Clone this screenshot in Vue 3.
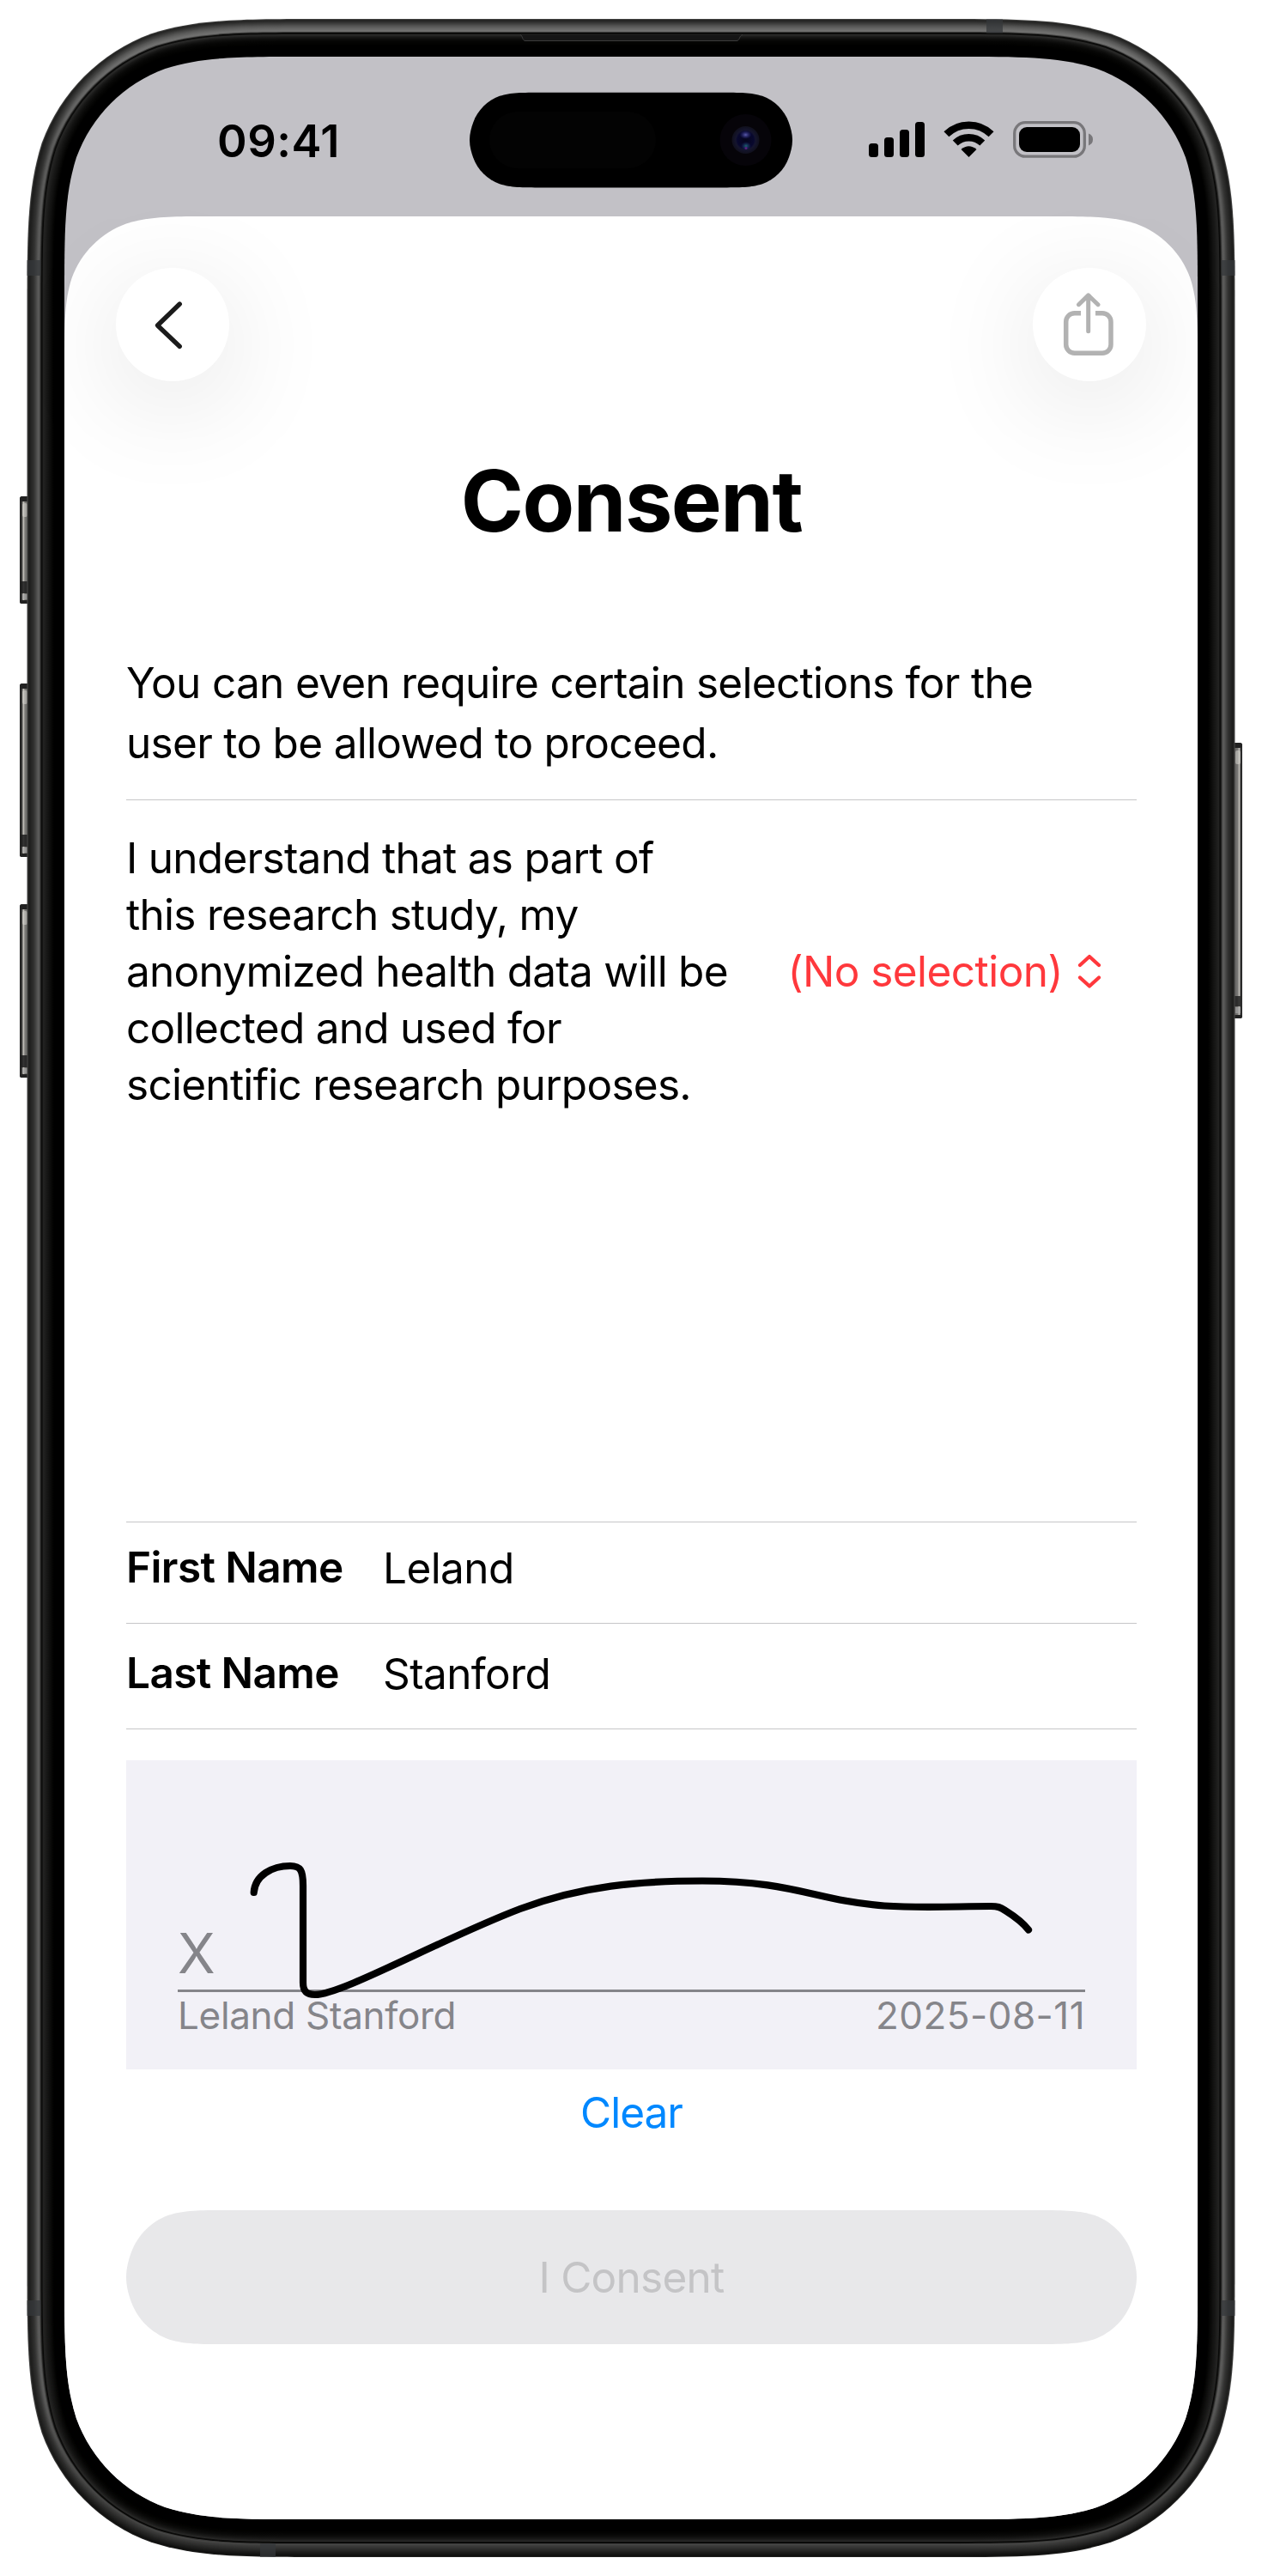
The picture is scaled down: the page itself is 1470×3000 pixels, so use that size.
<script setup>
// Continuous-curvature corner, in units of the corner radius.
const A = 1.52866, B = 1.08849, C = 0.86841, D = 0.63149, E = 0.07491, F = 0.37282, G = 0.16906

function squircle(x, y, w, h, r, rb = r) {
  const X = x + w, Y = y + h
  const bottom = rb
    ? `V${Y - A * rb}C${X} ${Y - B * rb} ${X} ${Y - C * rb} ${X - E * rb} ${Y - D * rb}` +
      `C${X - G * rb} ${Y - F * rb} ${X - F * rb} ${Y - G * rb} ${X - D * rb} ${Y - E * rb}` +
      `C${X - C * rb} ${Y} ${X - B * rb} ${Y} ${X - A * rb} ${Y}H${x + A * rb}` +
      `C${x + B * rb} ${Y} ${x + C * rb} ${Y} ${x + D * rb} ${Y - E * rb}` +
      `C${x + F * rb} ${Y - G * rb} ${x + G * rb} ${Y - F * rb} ${x + E * rb} ${Y - D * rb}` +
      `C${x} ${Y - C * rb} ${x} ${Y - B * rb} ${x} ${Y - A * rb}`
    : `V${Y}H${x}`
  return `M${x + A * r} ${y}H${X - A * r}` +
    `C${X - B * r} ${y} ${X - C * r} ${y} ${X - D * r} ${y + E * r}` +
    `C${X - F * r} ${y + G * r} ${X - G * r} ${y + F * r} ${X - E * r} ${y + D * r}` +
    `C${X} ${y + C * r} ${X} ${y + B * r} ${X} ${y + A * r}` + bottom + `V${y + A * r}` +
    `C${x} ${y + B * r} ${x} ${y + C * r} ${x + E * r} ${y + D * r}` +
    `C${x + G * r} ${y + F * r} ${x + F * r} ${y + G * r} ${x + D * r} ${y + E * r}` +
    `C${x + C * r} ${y} ${x + B * r} ${y} ${x + A * r} ${y}Z`
}

function capsule(x, y, w, h) {
  const r = h / 2, X = x + w, Y = y + h
  return `M${x + A * r} ${y}H${X - A * r}` +
    `C${X - B * r} ${y} ${X - C * r} ${y} ${X - D * r} ${y + E * r}` +
    `C${X - F * r} ${y + G * r} ${X - G * r} ${y + F * r} ${X - E * r} ${y + D * r}` +
    `C${X - 0.038 * r} ${y + 0.735 * r} ${X} ${y + 0.86 * r} ${X} ${y + r}` +
    `C${X} ${Y - 0.86 * r} ${X - 0.038 * r} ${Y - 0.735 * r} ${X - E * r} ${Y - D * r}` +
    `C${X - G * r} ${Y - F * r} ${X - F * r} ${Y - G * r} ${X - D * r} ${Y - E * r}` +
    `C${X - C * r} ${Y} ${X - B * r} ${Y} ${X - A * r} ${Y}H${x + A * r}` +
    `C${x + B * r} ${Y} ${x + C * r} ${Y} ${x + D * r} ${Y - E * r}` +
    `C${x + F * r} ${Y - G * r} ${x + G * r} ${Y - F * r} ${x + E * r} ${Y - D * r}` +
    `C${x + 0.038 * r} ${Y - 0.735 * r} ${x} ${Y - 0.86 * r} ${x} ${y + r}` +
    `C${x} ${y + 0.86 * r} ${x + 0.038 * r} ${y + 0.735 * r} ${x + E * r} ${y + D * r}` +
    `C${x + G * r} ${y + F * r} ${x + F * r} ${y + G * r} ${x + D * r} ${y + E * r}` +
    `C${x + C * r} ${y} ${x + B * r} ${y} ${x + A * r} ${y}Z`
}

// Brightness of the metal band and glass edge, from the outside in.
const top = [66, 36, 40, 46, 54, 62, 70, 78, 86, 92, 98, 103, 108, 112, 108, 60, 6, 16, 42, 36, 28, 22, 17, 13, 10, 7, 5, 4, 3, 2, 1, 0]
const side = [70, 34, 30, 32, 36, 40, 44, 48, 54, 62, 70, 80, 88, 92, 84, 52, 20, 6, 34, 34, 31, 28, 25, 22, 20, 17, 14, 11, 8, 5, 2, 0]
const base = [30, 16, 18, 22, 26, 30, 34, 38, 42, 46, 50, 54, 58, 62, 70, 58, 6, 14, 40, 34, 28, 23, 19, 15, 12, 9, 7, 5, 3, 2, 1, 0]
const grey = v => `rgb(${v},${v},${Math.max(0, v - 1)})`
const rings = side.map((v, i) => ({
  id: `ring${i}`,
  d: squircle(31.5 + i, 22 + i, 1407 - 2 * i, 2956 - 2 * i, 229 - i),
  top: grey(top[i]), side: grey(v), base: grey(base[i]),
}))

const screenPath = squircle(75, 66, 1320, 2868, 186)
const sheetPath = squircle(75, 252, 1320, 2700, 114, 0)
const islandPath = capsule(547, 107.7, 376, 110.8)
const buttonPath = capsule(0, 0, 1177, 156)

const bands = [
  [31.5, 303, 16, 18], [1422.5, 303, 16, 18],
  [31.5, 2679, 16, 18], [1422.5, 2679, 16, 18],
  [1149, 22.5, 19, 16], [303, 2962, 18, 16],
]
const leftKeys = [[578, 125], [796, 202], [1053, 202]]

const names = [
  { label: 'First Name', value: 'Leland', key: 'first' },
  { label: 'Last Name', value: 'Stanford', key: 'last' },
]
</script>

<template>
  <div class="device">
    <svg class="frame" width="1470" height="3000" viewBox="0 0 1470 3000" aria-hidden="true">
      <defs>
        <linearGradient v-for="r in rings" :id="r.id" :key="r.id" x1="0" y1="0" x2="0" y2="1">
          <stop offset="0" :stop-color="r.top" />
          <stop offset="0.008" :stop-color="r.top" />
          <stop offset="0.05" :stop-color="r.side" />
          <stop offset="0.94" :stop-color="r.side" />
          <stop offset="0.985" :stop-color="r.base" />
          <stop offset="1" :stop-color="r.base" />
        </linearGradient>
        <linearGradient id="key" x1="0" y1="0" x2="1" y2="0">
          <stop offset="0" stop-color="#222" /><stop offset="0.18" stop-color="#2a2a29" />
          <stop offset="0.36" stop-color="#c4c2bc" /><stop offset="0.5" stop-color="#7a7976" />
          <stop offset="1" stop-color="#5c5b59" />
        </linearGradient>
        <linearGradient id="keyRight" x1="1" y1="0" x2="0" y2="0">
          <stop offset="0" stop-color="#222" /><stop offset="0.15" stop-color="#333" />
          <stop offset="0.28" stop-color="#c4c2bc" /><stop offset="0.42" stop-color="#7c7b79" />
          <stop offset="1" stop-color="#4c4b4a" />
        </linearGradient>
        <radialGradient id="lens">
          <stop offset="0" stop-color="#05051c" /><stop offset="0.6" stop-color="#08082e" />
          <stop offset="0.72" stop-color="#15152e" /><stop offset="1" stop-color="#10101c" />
        </radialGradient>
        <radialGradient id="glint">
          <stop offset="0" stop-color="#5c5cae" /><stop offset="1" stop-color="#2a2a80" stop-opacity="0" />
        </radialGradient>
        <radialGradient id="glow">
          <stop offset="0" stop-color="#1c6670" /><stop offset="1" stop-color="#1c2670" stop-opacity="0" />
        </radialGradient>
        <clipPath id="glass"><path :d="screenPath" /></clipPath>
      </defs>

      <g v-for="[y, h] in leftKeys" :key="y">
        <rect x="23" :y="y" width="12" :height="h" rx="3" fill="url(#key)" />
        <rect x="23" :y="y" width="12" height="6" rx="3" fill="#222" />
        <rect x="26" :y="y + 8" width="6" height="16" rx="2" fill="#d6d4ce" opacity=".55" />
        <rect x="24" :y="y + h - 26" width="10" height="14" fill="#1c1c1c" opacity=".85" />
        <rect x="26" :y="y + h - 11" width="6" height="6" fill="#aaa" opacity=".6" />
        <rect x="23" :y="y + h - 4" width="12" height="4" rx="2" fill="#222" />
      </g>
      <rect x="1435" y="865" width="12" height="321" rx="3" fill="url(#keyRight)" />
      <rect x="1435" y="865" width="12" height="6" rx="3" fill="#222" />
      <rect x="1439" y="874" width="6" height="16" rx="2" fill="#d6d4ce" opacity=".55" />
      <rect x="1437" y="1160" width="8" height="12" fill="#1c1c1c" opacity=".8" />
      <rect x="1439" y="1173" width="6" height="7" fill="#aaa" opacity=".6" />
      <rect x="1437" y="1182" width="10" height="4" rx="2" fill="#222" />

      <path v-for="r in rings" :key="r.id" :d="r.d" :fill="`url(#${r.id})`" />
      <rect v-for="b in bands" :key="b.join()" :x="b[0]" :y="b[1]" :width="b[2]" :height="b[3]"
        fill="#36383b" opacity=".75" />
      <path d="M606 40.500C609 41 608 47.500 612 47.500H858C862 47.500 861 41 865 40.500Z" fill="#151515" />
      <path d="M606 40.500C609 41 608 47.500 612 47.500H858C862 47.500 861 41 865 40.500" fill="none" stroke="#3c3c3c" />

      <g clip-path="url(#glass)">
        <rect x="75" y="66" width="1320" height="2868" fill="#c2c1c6" />
        <path :d="sheetPath" fill="#fff" />
      </g>

      <path :d="islandPath" />
      <rect x="570" y="130" width="194" height="66" rx="33" fill="#030303" />
      <circle cx="868.500" cy="163" r="30" fill="#060409" />
      <circle cx="868.500" cy="163" r="16" fill="url(#lens)" />
      <ellipse cx="868.500" cy="157" rx="7" ry="5" fill="url(#glint)" />
      <ellipse cx="869" cy="170" rx="6" ry="5" fill="url(#glow)" />
      <circle cx="869" cy="172.500" r="1.500" fill="#5a2080" />
    </svg>

    <div class="screen">
      <header class="status">
        <span class="time">09:41</span>
        <svg class="indicators" width="264" height="46" viewBox="1011 140 264 46">
          <rect x="1012" y="167" width="11" height="16" rx="3.500" />
          <rect x="1030" y="160" width="11" height="23" rx="3.500" />
          <rect x="1048" y="151" width="11" height="32" rx="3.500" />
          <rect x="1066" y="142" width="11" height="41" rx="3.500" />
          <path d="M1128.500 183L1119.500 174Q1128.500 166.500 1137.500 174Z" />
          <g fill="none" stroke="#000" stroke-width="8.500">
            <path d="M1112.700 166.500A23 23 0 0 1 1144.300 166.500" />
            <path d="M1102.400 156.300A37.500 37.500 0 0 1 1154.600 156.300" />
          </g>
          <rect x="1181.700" y="142.700" width="81.600" height="39.500" rx="12.500" fill="none" stroke="#78777a" stroke-width="3.300" />
          <rect x="1187" y="148" width="71" height="29" rx="9" />
          <path d="M1268 155.500Q1273 157.500 1273 162.500T1268 169.500Z" fill="#78777a" />
        </svg>
      </header>

      <nav class="toolbar">
        <button class="round" aria-label="Back">
          <svg width="132" height="132" viewBox="135 312 132 132">
            <path d="M209.300 354L183.500 379L209.300 403.500" fill="none" stroke="#1b1b1b" stroke-width="5.300"
              stroke-linecap="round" stroke-linejoin="round" />
          </svg>
        </button>
        <button class="round" aria-label="Share" disabled>
          <svg width="132" height="132" viewBox="1203 312 132 132">
            <g fill="none" stroke="#b2b2b2" stroke-width="5.500">
              <path d="M1259 364.700H1251.700A10 10 0 0 0 1241.700 374.700V401.300A10 10 0 0 0 1251.700 411.300H1284A10 10 0 0 0 1294 401.300V374.700A10 10 0 0 0 1284 364.700H1276" />
              <path d="M1267.700 385.700V344M1256.500 354.700L1267.700 343.900L1279 354.700" stroke-width="5" stroke-linecap="round" stroke-linejoin="round" />
            </g>
          </svg>
        </button>
      </nav>

      <main class="content">
        <h1>Consent</h1>
        <p class="intro">You can even require certain selections for the<br>user to be allowed to proceed.</p>
        <section class="choice">
          <p>I understand that as part of<br>this research study, my<br>anonymized health data will be<br>collected and used for<br>scientific research purposes.</p>
          <div class="picker">
            <span>(No selection)</span>
            <svg width="30" height="42" viewBox="0 0 30 42">
              <path d="M4 14L15 4L26 14M4 28.500L15 38.500L26 28.500" fill="none" stroke="#ff383c" stroke-width="4.200"
                stroke-linecap="round" stroke-linejoin="round" />
            </svg>
          </div>
        </section>

        <section class="names">
          <div v-for="n in names" :key="n.key" class="name" :class="n.key">
            <span class="label">{{ n.label }}</span>
            <span class="value">{{ n.value }}</span>
          </div>
        </section>

        <section class="signature">
          <div class="mark">X</div>
          <div class="rule"></div>
          <div class="caption"><span>Leland Stanford</span><span class="date">2025-08-11</span></div>
          <svg class="ink" width="1177" height="360" viewBox="147 2050 1177 360">
            <path d="M295.700 2204C297 2184 317 2173 338 2173C350 2173 353 2178 353 2196V2309C353 2319 357 2323 367 2323C398 2323 514 2258 606 2223C678 2196 745 2190.500 818 2190.500C925 2190.500 948 2213 1030 2219.500C1075 2222.500 1115 2220 1154 2220C1162 2220 1165 2221 1171 2225Q1190 2237 1198 2247.500"
              fill="none" stroke="#000" stroke-width="8.200" stroke-linecap="round" stroke-linejoin="round" />
          </svg>
        </section>
        <button class="clear">Clear</button>

        <button class="consent" disabled>
          <svg class="pill" width="1177" height="156" viewBox="0 0 1177 156"><path :d="buttonPath" fill="#e8e8ea" /></svg>
          <span>I Consent</span>
        </button>
      </main>
    </div>
  </div>
</template>

<style>
body { margin: 0; background: #fff; }
</style>

<style scoped>
.device {
  position: relative;
  width: 1470px;
  height: 3000px;
  overflow: hidden;
  background: #fff;
  font-family: Inter, "Liberation Sans", sans-serif;
  font-size: 49.5px;
  letter-spacing: -0.6px;
  color: #000;
}
.frame { position: absolute; inset: 0; }
.screen {
  position: relative;
  box-sizing: border-box;
  width: 1320px;
  height: 2868px;
  margin: 66px 75px;
  display: flex;
  flex-direction: column;
}
p, h1 { margin: 0; }
button {
  padding: 0;
  border: 0;
  background: none;
  font: inherit;
  letter-spacing: inherit;
  color: inherit;
}
.status {
  display: flex;
  justify-content: space-between;
  box-sizing: border-box;
  height: 186px;
  padding: 68px 120px 0 178px;
}
.time { font-size: 52.5px; line-height: 60px; font-weight: 600; letter-spacing: 0.5px; }
.indicators { margin-top: 6px; }
.toolbar {
  display: flex;
  justify-content: space-between;
  padding: 60px 60px 0;
}
.round {
  width: 132px;
  height: 132px;
  border-radius: 50%;
  background: #fff;
  box-shadow: 0 24px 130px rgba(0, 0, 0, .12);
}
.round svg { display: block; }
.content {
  display: flex;
  flex-direction: column;
  padding: 0 71px 0 72px;
}
h1 {
  margin-top: 79px;
  font-size: 99px;
  line-height: 120px;
  font-weight: 700;
  letter-spacing: -1.5px;
  text-align: center;
}
.intro {
  height: 140px;
  margin-top: 117px;
  padding-bottom: 31px;
  border-bottom: 1px solid #c6c6c8;
  line-height: 70px;
  letter-spacing: -0.69px;
  white-space: nowrap;
}
.choice {
  display: flex;
  align-items: center;
  justify-content: space-between;
  margin-top: 34px;
  line-height: 66px;
  letter-spacing: -0.72px;
  white-space: nowrap;
}
.picker {
  display: flex;
  align-items: center;
  gap: 16px;
  padding-right: 40px;
  letter-spacing: -0.55px;
  color: #ff383c;
}
.names {
  margin-top: 476px;
  border-top: 1px solid #c6c6c8;
}
.name {
  display: flex;
  box-sizing: border-box;
  border-bottom: 1px solid #c6c6c8;
  line-height: 60px;
}
.first { height: 118px; padding-top: 22px; }
.last { height: 123px; padding-top: 27px; }
.label { width: 299px; font-weight: 600; }
.value { padding-top: 1px; }
.signature {
  position: relative;
  box-sizing: border-box;
  height: 360px;
  margin-top: 36px;
  padding: 185px 60px 0;
  background: #f2f1f7;
  color: #85858a;
}
.mark { font-size: 64px; line-height: 80px; }
.rule { height: 3px; margin-top: 2px; background: #85858a; }
.caption {
  display: flex;
  justify-content: space-between;
  font-size: 44px;
  line-height: 54px;
  letter-spacing: -0.32px;
}
.date { letter-spacing: 0.45px; }
.ink { position: absolute; left: 0; top: 0; }
.clear {
  align-self: center;
  margin-top: 20px;
  line-height: 60px;
  letter-spacing: -1px;
  color: #0088ff;
}
.consent {
  position: relative;
  height: 156px;
  margin-top: 84px;
  line-height: 156px;
  letter-spacing: -0.75px;
  color: #c4c4c6;
}
.pill { position: absolute; left: 0; top: 0; }
.consent span { position: relative; }
</style>
